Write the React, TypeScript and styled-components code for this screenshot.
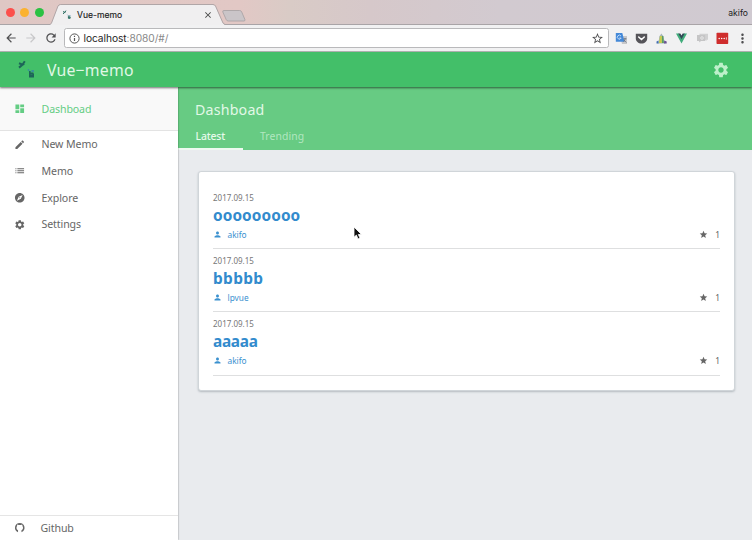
import React from "react";
import styled, { createGlobalStyle } from "styled-components";
import {
  MdArrowBack,
  MdArrowForward,
  MdClose,
  MdDashboard,
  MdEdit,
  MdExplore,
  MdList,
  MdMoreVert,
  MdPerson,
  MdRefresh,
  MdSettings,
  MdStar,
  MdStarBorder,
} from "react-icons/md";

const GlobalStyle = createGlobalStyle`
  * { box-sizing: border-box; }
  body { margin: 0; overflow: hidden; }
`;

const Window = styled.div`
  display: flex;
  flex-direction: column;
  width: 752px;
  height: 540px;
  overflow: hidden;
  background: #e9ebee;
  font-family: "Noto Sans", sans-serif;
`;

/* Browser frame */
const TabStrip = styled.div`
  display: flex;
  height: 25px;
  flex: none;
  background: linear-gradient(90deg, #dfc7c4 0, #e2c8c5 240px, #d9cbc6 290px, #d6c8ca 370px, #d2cad0 500px, #d0cad1 752px);
  border-bottom: 1px solid #a9a4a7;
  font-family: Inter, sans-serif;
`;

const Lights = styled.div`
  display: flex;
  gap: 5.4px;
  width: 50px;
  flex: none;
  padding: 8px 0 0 6px;
`;

const Light = styled.i<{ $color: string }>`
  width: 9px;
  height: 9px;
  border-radius: 50%;
  background: ${(p) => p.$color};
`;

const Tab = styled.div`
  position: relative;
  display: flex;
  align-items: center;
  width: 175px;
  height: 25px;
  flex: none;
  padding: 5px 12px 0 12px;
  color: #222;
  font-size: 8.6px;
`;

const TabShape = styled.svg`
  position: absolute;
  left: 0;
  top: 0;
`;

const TabLogo = styled.span`
  position: relative;
  display: flex;
  width: 15px;
`;

const TabTitle = styled.span`
  position: relative;
  flex: 1;
  line-height: 12px;
  -webkit-text-stroke: 0.15px #222;
`;

const TabClose = styled(MdClose)`
  position: relative;
  width: 10px;
  height: 10px;
  color: #444;
`;

const NewTab = styled.svg`
  margin: 9px 0 0 -4px;
  overflow: visible;
`;

const Profile = styled.span`
  margin: 7px 4px 0 auto;
  font-size: 8.6px;
  line-height: 12px;
  color: #222;
`;

const Toolbar = styled.div`
  display: flex;
  align-items: center;
  height: 27px;
  flex: none;
  padding: 0 2px 0 4px;
  background: #f1f1f2;
  border-bottom: 1px solid #b5b7b6;
`;

const NavButton = styled.span<{ $disabled?: boolean }>`
  display: flex;
  width: 20px;
  color: ${(p) => (p.$disabled ? "#c7c7c9" : "#515153")};
  svg { width: 14px; height: 14px; }
`;

const Address = styled.div`
  display: flex;
  align-items: center;
  width: 545px;
  height: 20px;
  padding: 0 4px;
  background: #fff;
  border: 1px solid #b9b9bb;
  border-radius: 2.5px;
  font-family: Inter, sans-serif;
  font-size: 10.2px;
  color: #888;
`;

const Url = styled.span`
  flex: 1;
  margin: 0 0 0 3.5px;
  line-height: 16px;
  letter-spacing: -0.05px;
  b { font-weight: 400; color: #1e1e1e; }
`;

const Bookmark = styled(MdStarBorder)`
  width: 13px;
  height: 13px;
  color: #4f4f51;
`;

const Extensions = styled.div`
  display: flex;
  flex: 1;
  align-items: center;
  margin-left: 6px;
  gap: 7.2px;
  svg { flex: none; }
`;

const MenuDots = styled(MdMoreVert)`
  width: 15px;
  height: 15px;
  margin-left: -1px;
  color: #4f4f51;
`;

/* Memo application */
const AppBar = styled.header`
  position: relative;
  z-index: 2;
  display: flex;
  align-items: center;
  height: 35px;
  flex: none;
  padding: 0 23px 0 17px;
  background: #43bf69;
  box-shadow: 0 1px 2px rgba(0, 0, 0, 0.55);
  color: #e0f8e6;
`;

const Brand = styled.span`
  flex: 1;
  margin-left: 10px;
  font-size: 15.8px;
  line-height: 22px;
  letter-spacing: 0.2px;
`;

const BarGear = styled(MdSettings)`
  width: 18px;
  height: 18px;
  margin-right: -1px;
  color: #bdf0ca;
`;

const Body = styled.div`
  display: flex;
  flex: 1;
  min-height: 0;
`;

const Sidebar = styled.nav`
  position: relative;
  z-index: 1;
  display: flex;
  flex-direction: column;
  width: 178px;
  flex: none;
  background: #fff;
  box-shadow: 0.5px 0 1.5px rgba(0, 0, 0, 0.35);
`;

const NavList = styled.div`
  flex: 1;
`;

const NavItem = styled.a<{ $active?: boolean; $footer?: boolean }>`
  display: flex;
  align-items: center;
  gap: ${(p) => (p.$footer ? "15px" : "16px")};
  height: ${(p) => (p.$active ? "44px" : p.$footer ? "25px" : "26.7px")};
  padding-left: 14px;
  background: ${(p) => (p.$active ? "#f9f9f9" : "#fff")};
  border-bottom: ${(p) => (p.$active ? "1px solid #e3e3e3" : "none")};
  border-top: ${(p) => (p.$footer ? "1px solid #e5e5e5" : "none")};
  color: ${(p) => (p.$active ? "#64cd84" : "#666")};
  font-size: 10.6px;
  letter-spacing: -0.1px;
  svg { width: 11.5px; height: 11.5px; }
`;

const Main = styled.main`
  flex: 1;
  min-width: 0;
`;

const PageHead = styled.div`
  display: flex;
  flex-direction: column;
  height: 63px;
  padding-top: 13px;
  background: #67cb83;
`;

const PageTitle = styled.h1`
  margin: 0 0 0 17px;
  color: #e2f8e7;
  font-size: 14.2px;
  font-weight: 400;
  line-height: 20px;
  letter-spacing: 0.2px;
`;

const Tabs = styled.div`
  display: flex;
  flex: 1;
  gap: 17px;
`;

const PageTab = styled.a<{ $active?: boolean }>`
  width: 65px;
  padding-left: ${(p) => (p.$active ? "17.5px" : "0")};
  padding-top: 8px;
  border-bottom: 2px solid ${(p) => (p.$active ? "#edfaf0" : "transparent")};
  color: ${(p) => (p.$active ? "#e6faeb" : "#b2e7c0")};
  font-size: 10.4px;
  font-weight: ${(p) => (p.$active ? 500 : 400)};
  line-height: 16px;
  letter-spacing: ${(p) => (p.$active ? "-0.15px" : "0.08px")};
`;

const Card = styled.section`
  width: 537px;
  height: 220px;
  margin: 20.5px 0 0 20px;
  padding: 17.5px 14px 0;
  background: #fff;
  border: 1px solid #d0d5d9;
  border-radius: 3px;
  box-shadow: 0 1px 2px rgba(60, 75, 85, 0.3);
`;

const Memo = styled.article`
  height: 63.3px;
  border-bottom: 1px solid #dedfe0;
  padding-top: 6px;
  &:first-child { height: 60px; padding-top: 3px; }
`;

const MemoDate = styled.time`
  display: block;
  color: #777;
  font-size: 8px;
  line-height: 12px;
`;

const MemoTitle = styled.h2<{ $spacing: number }>`
  margin: 0.5px 0 1.5px;
  color: #328bcd;
  font-size: 15.4px;
  font-weight: 700;
  line-height: 21px;
  letter-spacing: ${(p) => p.$spacing}px;
`;

const MemoMeta = styled.div`
  display: flex;
  align-items: center;
  justify-content: space-between;
  height: 15px;
  font-size: 8.3px;
`;

const Author = styled.span`
  display: flex;
  align-items: center;
  gap: 5.5px;
  color: #3b91cf;
  svg { width: 9px; height: 9px; }
`;

const Stars = styled.span`
  display: flex;
  align-items: center;
  gap: 7px;
  color: #666;
  svg { width: 9px; height: 9px; margin-top: -1px; }
`;

const Cursor = styled.svg`
  position: absolute;
  z-index: 5;
  left: 353px;
  top: 226px;
`;

const BrandLogo = ({ size }: { size: number }) => (
  <svg width={size} height={size} viewBox="0 0 20 20" fill="none" stroke="#1d6558">
    <path d="M2 3.2l3 1.2M7.8 1.3 5.4 4.9 2 7.6M5.3 4.700l2-.8" strokeWidth="2" />
    <path d="M12.8 11v2.400h3.600M12.800 13.500v3.300h3.400v-3.200M12.300 15.200h4.400" strokeWidth="1.600" />
    <path d="M11 9.500l1 1.200M14.400 11h2.500" stroke="#397fae" strokeWidth="1.300" />
  </svg>
);

/* Round GitHub mark with an open ring */
const GithubIcon = () => (
  <svg viewBox="0 0 24 24" fill="currentColor">
    <path d="M12 2A10 10 0 0 0 8.4 21.300V17c-2.200-1-3.200-3-3.200-5.200 0-1.500.500-2.800 1.300-3.700-.2-1-.1-2 .3-3 1.200 0 2.200.6 3 1.200a10 10 0 0 1 4.400 0c.8-.6 1.800-1.200 3-1.200.4 1 .5 2 .3 3 .8.9 1.300 2.200 1.300 3.700 0 2.200-1 4.200-3.200 5.200v4.300A10 10 0 0 0 12 2z" />
  </svg>
);

const InfoIcon = () => (
  <svg width="11" height="11" viewBox="0 0 11 11" fill="none" stroke="#555">
    <circle cx="5.5" cy="5.5" r="4.6" />
    <path d="M5.5 5v3M5.5 2.8V4" strokeWidth="1.2" />
  </svg>
);

const TranslateIcon = () => (
  <svg width="13" height="13" viewBox="0 0 13 13">
    <path d="M5 4h7v8H7z" fill="#c8c8ca" />
    <path d="M.8 1h6.5l2.2 8.800H.8z" fill="#4489d8" />
    <path d="M6 4a2 2 0 1 0 .2 2H4.400" fill="none" stroke="#dcecff" strokeWidth=".8" />
    <path d="M8.500 6.800h3M10 6v1c-.2 1.600-1 2.300-1.700 3m.6-2 2.500 2.500" fill="none" stroke="#68717d" strokeWidth=".8" />
  </svg>
);

const PocketIcon = () => (
  <svg width="13" height="13" viewBox="0 0 13 13">
    <path d="M.8 1.8h11.4v4.400c0 3.200-2.500 5.300-5.700 5.300S.8 9.400.8 6.200z" fill="#555459" />
    <path d="M3.700 5l2.800 2.600L9.300 5" fill="none" stroke="#fff" strokeWidth="1.5" strokeLinecap="round" />
  </svg>
);

const LighthouseIcon = () => (
  <svg width="13" height="13" viewBox="0 0 13 13">
    <path d="M2.500 11.500C4 10 4 7 4.200 4.500l2.200-3 2.200 3c.5 2.800.4 5 2 7z" fill="#a7b7b9" />
    <path d="M5 4h1.800v7H4z" fill="#c9cd48" />
    <path d="M7 4h1.300l.6 7H7z" fill="#5b9c66" />
    <path d="M1.500 9.500l2-1v3h-2z" fill="#4470b1" />
    <path d="M9.200 8.500l2.500 1v2H9z" fill="#6a5294" />
  </svg>
);

const VueIcon = () => (
  <svg width="13" height="13" viewBox="0 0 13 13">
    <path d="M1 1.400h3l2.500 4.300L9 1.400h3L6.500 11.500z" fill="#42ad7c" />
    <path d="M3.300 1.400h2l1.200 2 1.200-2h2L6.500 7.200z" fill="#314956" />
  </svg>
);

const ChatIcon = () => (
  <svg width="13" height="13" viewBox="0 0 13 13">
    <path d="M3.500 1.800H12v6h-1.500V9L8.800 7.800H3.500z" fill="#d1d1d2" />
    <path d="M1 3h8.200v6H5l-1.800 1.500V9H1z" fill="#c5c5c6" />
    <circle cx="6" cy="6" r="1.300" fill="none" stroke="#eee" strokeWidth=".8" />
  </svg>
);

const PasswordIcon = () => (
  <svg width="13" height="13" viewBox="0 0 13 13">
    <rect x=".5" y=".8" width="11.7" height="11.2" rx=".7" fill="#cf2d2d" />
    <circle cx="3.200" cy="6.500" r=".75" fill="#fff" />
    <circle cx="5.700" cy="6.500" r=".75" fill="#fff" />
    <circle cx="8.200" cy="6.500" r=".75" fill="#fff" />
    <path d="M10.400 5.300v2.400" stroke="#fff" strokeWidth=".7" />
  </svg>
);

const links = [
  { label: "New Memo", Icon: MdEdit },
  { label: "Memo", Icon: MdList },
  { label: "Explore", Icon: MdExplore },
  { label: "Settings", Icon: MdSettings },
];

const memos = [
  { title: "ooooooooo", author: "akifo", spacing: 0.08 },
  { title: "bbbbb", author: "lpvue", spacing: 0.35 },
  { title: "aaaaa", author: "akifo", spacing: -0.3 },
];

export default function App() {
  return (
    <>
      <GlobalStyle />
      <Window>
        <TabStrip>
          <Lights>
            <Light $color="#fc4f4c" />
            <Light $color="#fbb231" />
            <Light $color="#2bc143" />
          </Lights>
          <Tab>
            <TabShape width="175" height="26" viewBox="0 0 175 26">
              <path d="M0 25L1.500 23.500 8 6.500Q8.800 5 10.500 5H163Q164.700 5 165.500 6.500L173 23.500 175 25z" fill="#f0eff0" />
              <path d="M0 24.500L1.500 23 8 6Q8.800 4.500 10.500 4.500H163Q164.700 4.500 165.500 6L173 23 175 24.500" fill="none" stroke="#aaa2a4" strokeWidth=".9" />
            </TabShape>
            <TabLogo><BrandLogo size={10} /></TabLogo>
            <TabTitle>Vue-memo</TabTitle>
            <TabClose />
          </Tab>
          <NewTab width="26" height="14" viewBox="0 0 26 14">
            <path d="M3 1.500h15.500q1.600 0 2.200 1.400l3.200 7.600q.5 1.500-1 1.500H7.300q-1.500 0-2-1.200L1.800 3q-.5-1.500 1.200-1.500z" fill="#cac5c8" stroke="#a49fa2" strokeWidth=".8" />
          </NewTab>
          <Profile>akifo</Profile>
        </TabStrip>
        <Toolbar>
          <NavButton><MdArrowBack /></NavButton>
          <NavButton $disabled><MdArrowForward /></NavButton>
          <NavButton><MdRefresh /></NavButton>
          <Address>
            <InfoIcon />
            <Url><b>localhost</b>:8080/#/</Url>
            <Bookmark />
          </Address>
          <Extensions>
            <TranslateIcon />
            <PocketIcon />
            <LighthouseIcon />
            <VueIcon />
            <ChatIcon />
            <PasswordIcon />
            <MenuDots />
          </Extensions>
        </Toolbar>
        <AppBar>
          <BrandLogo size={20} />
          <Brand>Vue−memo</Brand>
          <BarGear />
        </AppBar>
        <Body>
          <Sidebar>
            <NavList>
              <NavItem $active><MdDashboard /><span>Dashboad</span></NavItem>
              {links.map(({ label, Icon }) => (
                <NavItem key={label}><Icon /><span>{label}</span></NavItem>
              ))}
            </NavList>
            <NavItem $footer><GithubIcon /><span>Github</span></NavItem>
          </Sidebar>
          <Main>
            <PageHead>
              <PageTitle>Dashboad</PageTitle>
              <Tabs>
                <PageTab $active>Latest</PageTab>
                <PageTab>Trending</PageTab>
              </Tabs>
            </PageHead>
            <Card>
              {memos.map((memo) => (
                <Memo key={memo.title}>
                  <MemoDate>2017.09.15</MemoDate>
                  <MemoTitle $spacing={memo.spacing}>{memo.title}</MemoTitle>
                  <MemoMeta>
                    <Author><MdPerson />{memo.author}</Author>
                    <Stars><MdStar />1</Stars>
                  </MemoMeta>
                </Memo>
              ))}
            </Card>
          </Main>
        </Body>
        <Cursor width="10" height="15" viewBox="0 0 10 15">
          <path d="M1 1v10.200l2.400-2.100L5 13l2-.9-1.700-3.600h3.200z" fill="#111" stroke="#fff" strokeWidth=".8" />
        </Cursor>
      </Window>
    </>
  );
}
